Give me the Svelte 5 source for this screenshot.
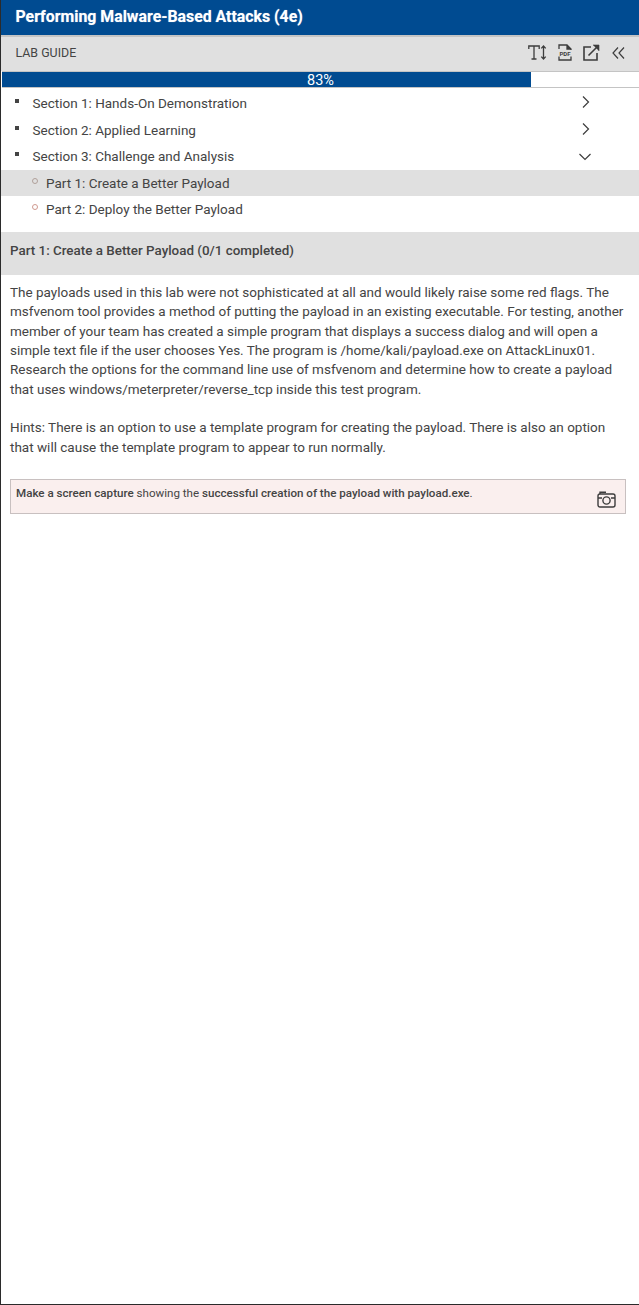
<script>
	const sections = [
		{ title: 'Section 1: Hands-On Demonstration', open: false },
		{ title: 'Section 2: Applied Learning', open: false },
		{ title: 'Section 3: Challenge and Analysis', open: true }
	];
	const parts = [
		{ title: 'Part 1: Create a Better Payload', active: true },
		{ title: 'Part 2: Deploy the Better Payload', active: false }
	];
	let progress = 83;
</script>

<div class="guide">
	<header class="title-bar">Performing Malware-Based Attacks (4e)</header>

	<div class="toolbar">
		<span class="toolbar-label">LAB GUIDE</span>
		<div class="toolbar-icons">
			<svg class="i-text" width="19" height="15" viewBox="0 0 19 15" fill="none" stroke="#3d3d3d" stroke-width="1.3">
				<path d="M0.8 4V1H11.2V4M6 1V14M3.5 14H8.5" />
				<path d="M15.5 1V14M13.3 3.4L15.5 1L17.7 3.4M13.3 11.6L15.5 14L17.7 11.6" />
			</svg>
			<svg class="i-pdf" width="14" height="17" viewBox="0 0 14 17" fill="none" stroke="#3d3d3d" stroke-width="1.3">
				<path d="M1 5V1H9L13 5V6M1 12.5V16H13V12.5" />
				<path d="M9 1V5H13" fill="#3d3d3d" />
				<text x="7" y="11.5" text-anchor="middle" class="pdf-text">PDF</text>
			</svg>
			<svg class="i-open" width="17" height="17" viewBox="0 0 17 17" fill="none" stroke="#3d3d3d" stroke-width="1.6">
				<path d="M8 3H1V16H14V9" />
				<path d="M5.5 11.5L15 2" />
				<path d="M10 1H16V7" fill="#3d3d3d" stroke-width="0.6" />
			</svg>
			<svg class="i-collapse" width="13" height="12" viewBox="0 0 13 12" fill="none" stroke="#3d3d3d" stroke-width="1.2">
				<path d="M6 0.5L1 6L6 11.5M12 0.5L7 6L12 11.5" />
			</svg>
		</div>
	</div>

	<div class="progress">
		<div class="progress-fill" style="width: {progress}%"></div>
		<span class="progress-label">{progress}%</span>
	</div>

	<ul class="sections">
		{#each sections as section}
			<li class="section">
				<span class="bullet"></span>
				<span class="section-title">{section.title}</span>
				<svg class="chevron" class:open={section.open} width="12" height="12" viewBox="0 0 12 12" fill="none" stroke="#3d3d3d" stroke-width="1.2">
					{#if section.open}
						<path d="M0.5 3L6 8.5L11.5 3" />
					{:else}
						<path d="M3 0.5L8.5 6L3 11.5" />
					{/if}
				</svg>
			</li>
		{/each}
	</ul>
	<ul class="parts">
		{#each parts as part}
			<li class="part" class:active={part.active}>
				<span class="ring"></span>
				{part.title}
			</li>
		{/each}
	</ul>

	<h2 class="part-heading">Part 1: Create a Better Payload (0/1 completed)</h2>

	<div class="content">
		<p>The payloads used in this lab were not sophisticated at all and would likely raise some red flags. The msfvenom tool provides a method of putting the payload in an existing executable. For testing, another member of your team has created a simple program that displays a success dialog and will open a simple text file if the user chooses Yes. The program is /home/kali/payload.exe on AttackLinux01. Research the options for the command line use of msfvenom and determine how to create a payload that uses windows/meterpreter/reverse_tcp inside this test program.</p>
		<p>Hints: There is an option to use a template program for creating the payload. There is also an option that will cause the template program to appear to run normally.</p>
	</div>

	<div class="capture">
		<span><b>Make a screen capture</b> showing the <b>successful creation of the payload with payload.exe</b>.</span>
		<svg class="camera" width="19" height="17" viewBox="0 0 19 17" fill="none" stroke="#3d3d3d" stroke-width="1.4">
			<rect x="1" y="3" width="17" height="13" rx="2" />
			<path d="M3 3V1.2H9" />
			<path d="M1 7H5M14 7H18" />
			<circle cx="9.5" cy="9.5" r="3.6" />
		</svg>
	</div>
</div>

<style>
	:global(body) {
		background: #fff;
	}

	.guide {
		box-sizing: border-box;
		height: 1305px;
		border-left: 1px solid #2b2b2b;
		border-bottom: 1px solid #2b2b2b;
		font-family: Roboto, sans-serif;
		font-size: 13.5px;
		color: #444;
		overflow: hidden;
	}

	.title-bar {
		height: 35px;
		padding-left: 14.5px;
		line-height: 33px;
		font-size: 15.85px;
		font-weight: 700;
		color: #fff;
		text-shadow: 0 0 1px rgba(255, 255, 255, 0.5);
		background: #004b91;
	}

	.toolbar {
		display: flex;
		align-items: center;
		justify-content: space-between;
		height: 36px;
		padding: 0 14px 3px 14.5px;
		background: #e0e0e0;
		border-top: 2px solid #c4c4c4;
		box-sizing: border-box;
	}

	.toolbar-label {
		font-size: 12.4px;
	}

	.toolbar-icons {
		display: flex;
		align-items: center;
		gap: 11px;
	}

	.i-collapse {
		margin-left: 1px;
	}

	.pdf-text {
		font-family: Roboto, sans-serif;
		font-size: 6px;
		font-weight: 700;
		fill: #3d3d3d;
		stroke: none;
	}

	.progress {
		position: relative;
		height: 17px;
		margin-left: 1px;
		border-top: 1px solid #c4c4c4;
		border-bottom: 1px solid #c4c4c4;
		box-sizing: border-box;
		background: #fff;
	}

	.progress-fill {
		height: 100%;
		background: #004b91;
	}

	.progress-label {
		position: absolute;
		inset: 0;
		text-align: center;
		line-height: 18px;
		font-size: 14.5px;
		color: #fff;
	}

	ul {
		margin: 0;
		padding: 0;
		list-style: none;
	}

	.sections {
		padding-top: 2px;
	}

	.section {
		position: relative;
		display: flex;
		align-items: center;
		justify-content: space-between;
		height: 26.5px;
		padding: 0 47px 0 31.5px;
	}

	.chevron {
		margin-bottom: 2px;
	}

	.chevron.open {
		margin-bottom: 0;
		margin-top: 2px;
		margin-right: 1px;
	}

	.bullet {
		position: absolute;
		left: 14px;
		top: 9px;
		width: 4px;
		height: 4px;
		background: #444;
	}

	.part {
		position: relative;
		height: 26px;
		line-height: 26px;
		padding-left: 45px;
	}

	.part.active {
		background: #e0e0e0;
	}

	.ring {
		position: absolute;
		left: 31px;
		top: 8px;
		width: 6px;
		height: 6px;
		border: 1px solid #d09a90;
		border-radius: 50%;
		box-sizing: border-box;
	}

	.part.active .ring {
		border-color: #b0a09a;
	}

	.part-heading {
		margin: 10px 0 0;
		height: 43px;
		line-height: 38px;
		padding-left: 9px;
		font-size: 13.4px;
		font-weight: 500;
		color: #444;
		background: #e0e0e0;
	}

	.content {
		padding: 8.7px 12px 0 9px;
		line-height: 19.3px;
	}

	.content p {
		margin: 0 0 19.3px;
	}

	.capture {
		display: flex;
		align-items: flex-start;
		justify-content: space-between;
		box-sizing: border-box;
		height: 35px;
		margin: 22.3px 13px 0 9px;
		padding: 6px 9px 0 5px;
		font-size: 11.6px;
		background: #faefee;
		border: 1px solid #c8c0c0;
	}

	.capture b {
		font-weight: 500;
	}

	.camera {
		margin-top: 5px;
	}
</style>
